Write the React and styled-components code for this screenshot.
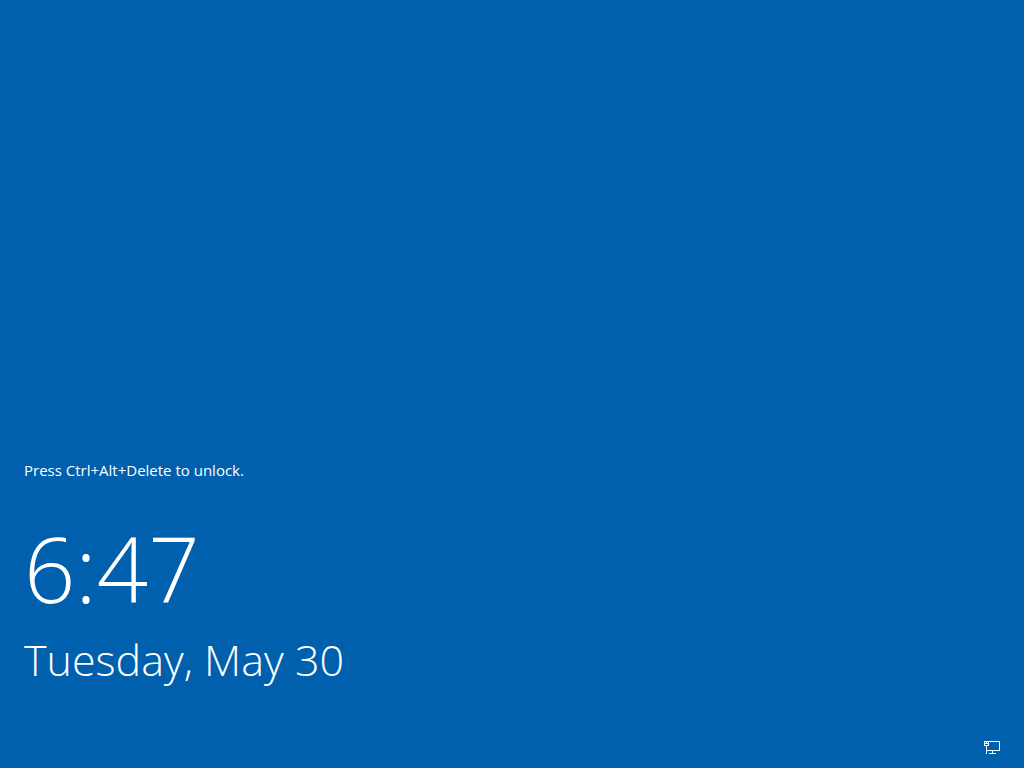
import React from 'react';
import styled, { createGlobalStyle } from 'styled-components';

const GlobalStyle = createGlobalStyle`
  * { box-sizing: border-box; }
  body { margin: 0; background: #0060ae; }
`;

const LockScreen = styled.main`
  min-height: 100vh;
  display: flex;
  align-items: flex-end;
  justify-content: space-between;
  padding: 0 24px 12px;
  background: #0060ae;
  color: #fff;
  font-family: "Open Sans", sans-serif;
`;

const Info = styled.section`
  display: flex;
  flex-direction: column;
  padding-bottom: 60px;
`;

const Hint = styled.p`
  margin: 0 0 32px;
  font-size: 15px;
  line-height: 20px;
`;

const Time = styled.time`
  font-size: 90px;
  line-height: 112px;
  font-weight: 300;
`;

const DateLine = styled.time`
  font-size: 43px;
  line-height: 72px;
  font-weight: 300;
`;

const NetworkIcon = styled.svg`
  display: block;
  width: 16px;
  height: 16px;
`;

export default function App() {
  return (
    <>
      <GlobalStyle />
      <LockScreen>
        <Info>
          <Hint>Press Ctrl+Alt+Delete to unlock.</Hint>
          <Time>6:47</Time>
          <DateLine>Tuesday, May 30</DateLine>
        </Info>
        <NetworkIcon viewBox="0 0 16 16" fill="#fff" shapeRendering="crispEdges" role="img" aria-label="Network">
          <path d="M0 1h5v5h-5z M1 2v1h1v-1z M3 2v1h1v-1z M1 4v1h3v-1z" fillRule="evenodd" />
          <path d="M5 1h11v10h-13v3h-1v-8h1v4h12v-8h-10z" />
          <path d="M8 11h1v2h3v1h-7v-1h3z" />
        </NetworkIcon>
      </LockScreen>
    </>
  );
}
